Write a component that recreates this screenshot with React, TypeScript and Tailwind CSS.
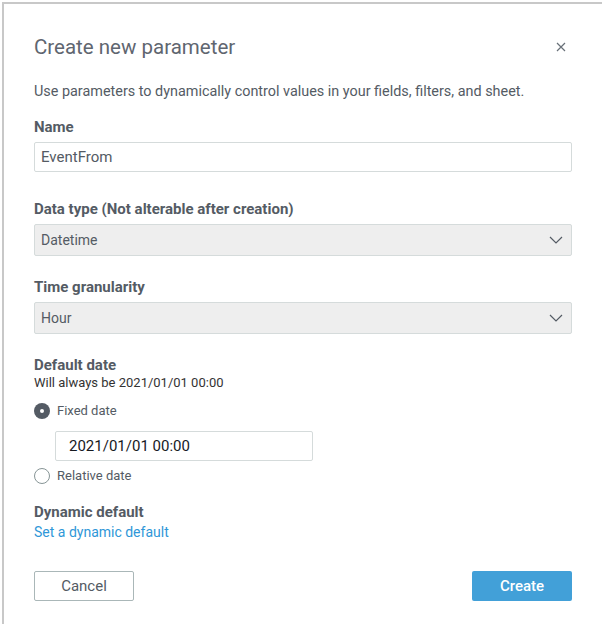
import React from "react";

function Chevron() {
  return (
    <svg width="14" height="8" viewBox="0 0 14 8" fill="none">
      <path d="M1 1l6 6 6-6" stroke="#545b64" strokeWidth="1.2" />
    </svg>
  );
}

function Select({ value }: { value: string }) {
  return (
    <div className="mt-[5px] flex h-[32px] items-center justify-between rounded-[2px] border border-[#d5dbdb] bg-[#eeeeee] pl-[6px] pr-[8px] text-[14px] text-[#545b64]">
      <span>{value}</span>
      <Chevron />
    </div>
  );
}

function Label({ children }: { children: React.ReactNode }) {
  return <div className="h-[20px] text-[15px] font-bold leading-[20px] text-[#545b64]">{children}</div>;
}

export default function App() {
  return (
    <div
      className="h-[624px] w-[604px] overflow-hidden bg-white pl-[2px] pt-[2px]"
      style={{ fontFamily: "Roboto, 'Liberation Sans', sans-serif" }}
    >
      <div className="h-[622px] w-[600px] border-l-2 border-t-2 border-[#c8c8c8] pl-[30px] pr-[30px] pt-[31px]">
        <div className="flex items-center justify-between">
          <h1 className="text-[20.5px] leading-[24px] text-[#5f6670]">Create new parameter</h1>
          <svg width="10" height="10" viewBox="0 0 10 10" className="mr-[6px]">
            <path d="M1 1l8 8M9 1l-8 8" stroke="#687078" strokeWidth="1.2" />
          </svg>
        </div>

        <p className="mt-[23px] text-[14.4px] leading-[20px] text-[#545b64]">
          Use parameters to dynamically control values in your fields, filters, and sheet.
        </p>

        <div className="mt-[15px]">
          <Label>Name</Label>
          <div className="mt-[5px] flex h-[30px] items-center rounded-[2px] border border-[#d5dbdb] bg-white pl-[6px] text-[15px] text-[#545b64]">
            EventFrom
          </div>
        </div>

        <div className="mt-[27px]">
          <Label>Data type (Not alterable after creation)</Label>
          <Select value="Datetime" />
        </div>

        <div className="mt-[21px]">
          <Label>Time granularity</Label>
          <Select value="Hour" />
        </div>

        <div className="mt-[21px]">
          <Label>Default date</Label>
          <div className="h-[16px] text-[13px] leading-[16px] text-[#333]">Will always be 2021/01/01 00:00</div>

          <div className="mt-[10px] flex h-[20px] items-center gap-[7px] text-[13px] text-[#545b64]">
            <span className="flex h-[16px] w-[16px] items-center justify-center rounded-full bg-[#545b64]">
              <span className="h-[4px] w-[4px] rounded-full bg-white" />
            </span>
            <span>Fixed date</span>
          </div>

          <div className="ml-[21px] mt-[10px] flex h-[30px] w-[258px] items-center rounded-[2px] border border-[#d5dbdb] pl-[13px] text-[15px] text-[#16191f]">
            2021/01/01 00:00
          </div>

          <div className="mt-[5px] flex h-[20px] items-center gap-[7px] text-[13px] text-[#545b64]">
            <span className="h-[16px] w-[16px] rounded-full border border-[#879596] bg-white" />
            <span>Relative date</span>
          </div>
        </div>

        <div className="mt-[16px]">
          <Label>Dynamic default</Label>
          <div className="h-[20px] text-[14px] leading-[20px] text-[#2f97d8]">Set a dynamic default</div>
        </div>

        <div className="mt-[29px] flex justify-between">
          <button className="h-[30px] w-[100px] rounded-[2px] border border-[#aab7b8] bg-white text-[15px] text-[#545b64]">
            Cancel
          </button>
          <button className="h-[30px] w-[100px] rounded-[2px] bg-[#42a0d8] text-[15px] font-medium text-white">
            Create
          </button>
        </div>
      </div>
    </div>
  );
}
